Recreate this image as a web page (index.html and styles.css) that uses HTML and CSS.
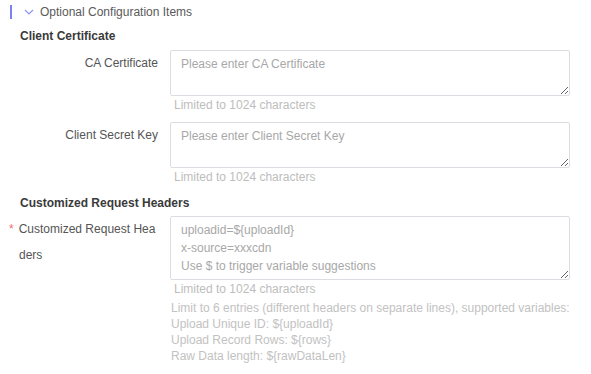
FILE: index.html
```html
<!DOCTYPE html>
<html lang="en">
<head>
    <meta charset="UTF-8">
    <meta name="viewport" content="width=device-width, initial-scale=1.0">
    <title>Optional Configuration Items</title>
    <link rel="stylesheet" href="styles.css">
</head>
<body>
<div class="panel">
    <div class="panel-head">
        <span class="panel-bar"></span>
        <svg class="chevron" width="10" height="6" viewBox="0 0 10 6">
            <path d="M1 1 L5 5 L9 1" fill="none" stroke="#8e93f2" stroke-width="1.2"/>
        </svg>
        <span class="panel-title">Optional Configuration Items</span>
    </div>

    <div class="section-title">Client Certificate</div>
    <div class="form-row">
        <label class="form-label" for="ca_cert">CA Certificate</label>
        <div class="form-control">
            <textarea id="ca_cert" rows="2" placeholder="Please enter CA Certificate"></textarea>
            <div class="tip">Limited to 1024 characters</div>
        </div>
    </div>
    <div class="form-row">
        <label class="form-label" for="client_key">Client Secret Key</label>
        <div class="form-control">
            <textarea id="client_key" rows="2" placeholder="Please enter Client Secret Key"></textarea>
            <div class="tip">Limited to 1024 characters</div>
        </div>
    </div>

    <div class="section-title section-title-gap">Customized Request Headers</div>
    <div class="form-row">
        <label class="form-label form-label-wrap" for="headers"><span class="required">*</span>Customized Request Headers</label>
        <div class="form-control">
            <textarea id="headers" rows="3" placeholder="uploadid=${uploadId}&#10;x-source=xxxcdn&#10;Use $ to trigger variable suggestions"></textarea>
            <div class="tip">Limited to 1024 characters</div>
            <div class="help">
                Limit to 6 entries (different headers on separate lines), supported variables:<br>
                Upload Unique ID: ${uploadId}<br>
                Upload Record Rows: ${rows}<br>
                Raw Data length: ${rawDataLen}
            </div>
        </div>
    </div>
</div>
</body>
</html>
```

FILE: styles.css
```css
body {
    font-family: "Liberation Sans", Arial, sans-serif;
    font-size: 12px;
    background-color: #fff;
    color: #555;
    margin: 0;
    padding: 0;
}
.panel {
    width: 591px;
}
.panel-head {
    display: flex;
    align-items: center;
    height: 24px;
    padding-left: 10px;
}
.panel-bar {
    width: 2px;
    height: 14px;
    background-color: #7c82f3;
}
.chevron {
    margin-left: 12px;
    margin-right: 6px;
}
.panel-title {
    color: #5a5a5a;
    font-size: 12px;
}
.section-title {
    font-weight: bold;
    color: #3a3a3a;
    line-height: 18px;
    padding-left: 20px;
    margin-top: 3px;
    margin-bottom: 5px;
}
.section-title-gap {
    margin-top: 7px;
    margin-bottom: 4px;
}
.form-row {
    display: flex;
    padding-left: 8px;
    margin-bottom: 8px;
}
.form-label {
    width: 150px;
    flex-shrink: 0;
    text-align: right;
    line-height: 24px;
    padding-top: 1px;
    color: #555;
    margin-right: 12px;
}
/* long label: asterisk hangs to the left, wrapped text lines up under the first word */
.form-label-wrap {
    box-sizing: border-box;
    text-align: left;
    word-break: break-all;
    line-height: 26px;
    padding-top: 0;
    padding-left: 11px;
    text-indent: -10px;
}
.required {
    color: #f56c6c;
    margin-right: 5px;
}
.form-control {
    width: 400px;
}
textarea {
    display: block;
    box-sizing: border-box;
    width: 400px;
    margin: 0;
    padding: 4px 10px;
    border: 1px solid #dcdde3;
    border-radius: 2px;
    font-family: "Liberation Sans", Arial, sans-serif;
    font-size: 12px;
    line-height: 18px;
    color: #555;
    resize: vertical;
    outline: none;
}
textarea::placeholder {
    color: #a8a8a8;
}
.tip {
    color: #bdbdbd;
    line-height: 18px;
    padding-left: 4px;
}
.help {
    color: #c2c2c2;
    line-height: 16px;
    margin-top: 2px;
    padding-left: 1px;
}
```
